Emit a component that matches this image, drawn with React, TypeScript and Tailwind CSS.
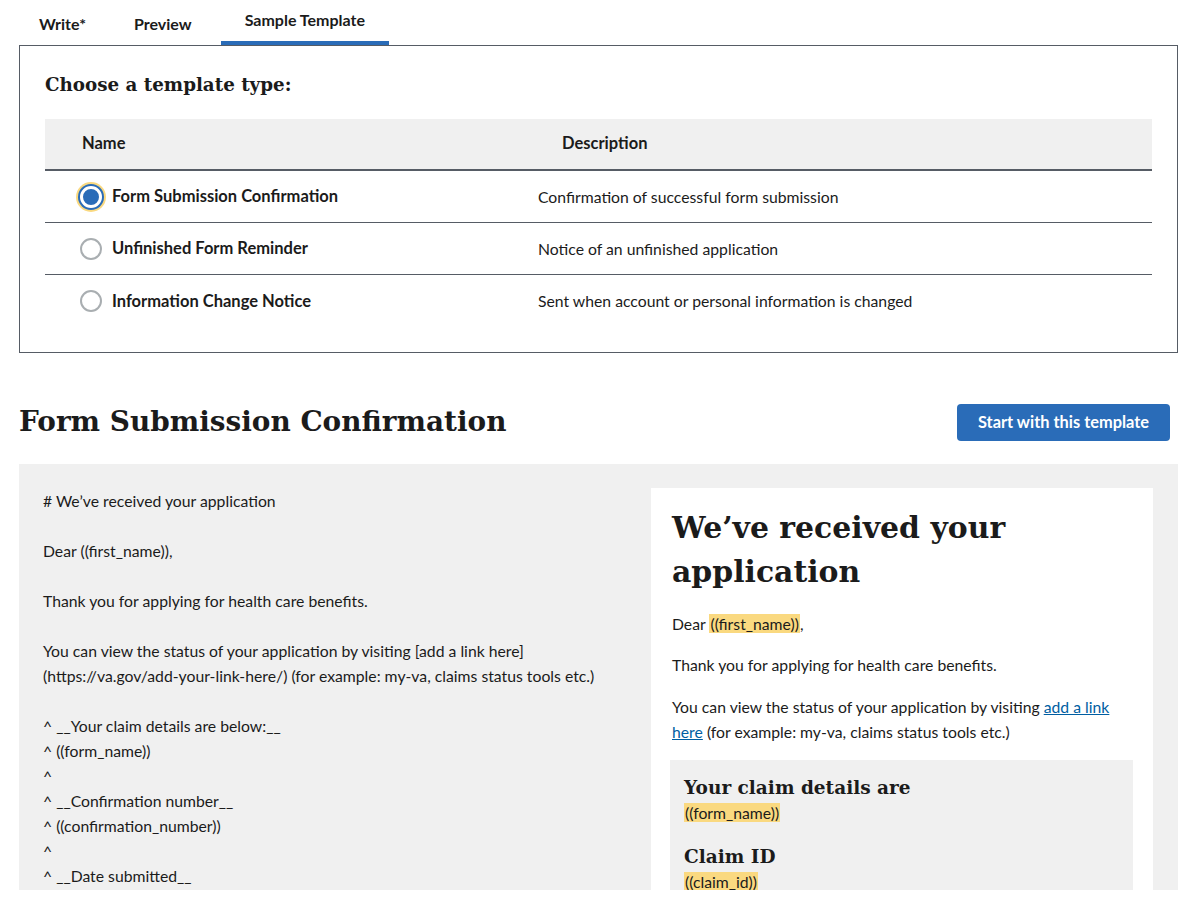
import React, { useState } from 'react';

const templates = [
    { id: 'confirm', name: 'Form Submission Confirmation', description: 'Confirmation of successful form submission' },
    { id: 'reminder', name: 'Unfinished Form Reminder', description: 'Notice of an unfinished application' },
    { id: 'change', name: 'Information Change Notice', description: 'Sent when account or personal information is changed' },
];

const markdownLines = [
    '# We\u2019ve received your application',
    '',
    'Dear ((first_name)),',
    '',
    'Thank you for applying for health care benefits.',
    '',
    'You can view the status of your application by visiting [add a link here]',
    '(https://va.gov/add-your-link-here/) (for example: my-va, claims status tools etc.)',
    '',
    '^ __Your claim details are below:__',
    '^ ((form_name))',
    '^',
    '^ __Confirmation number__',
    '^ ((confirmation_number))',
    '^',
    '^ __Date submitted__',
];

function Field({ children }: { children: React.ReactNode }) {
    return <span className="bg-[#fad980] px-px">{children}</span>;
}

export default function App() {
    const [selected, setSelected] = useState('confirm');
    const tabs = ['Write*', 'Preview', 'Sample Template'];

    return (
        <div className="min-h-screen bg-white font-['Lato',sans-serif] text-[15.75px] text-[#1b1b1b]">
            <div className="w-[1159px] ml-[19px]">
                {/* Tabs */}
                <div className="flex h-[45px] gap-[8px]">
                    {tabs.map((tab, i) => (
                        <div
                            key={tab}
                            className={
                                i === 2
                                    ? 'px-[24px] flex items-center font-bold text-[16px] border-b-4 border-[#2a6cb8] pb-[2px] ml-[1px]'
                                    : 'px-[20px] flex items-center font-bold text-[16px] pt-[3px]'
                            }
                        >
                            {tab}
                        </div>
                    ))}
                </div>

                {/* Template chooser */}
                <div className="border border-[#565c65] px-[25px] pt-[25px] pb-[25px]">
                    <h3 className="font-['DejaVu_Serif',serif] font-bold text-[18.3px] leading-[28px] mb-[20px] text-[#1b1b1b]">
                        Choose a template type:
                    </h3>
                    <div>
                        <div className="flex h-[52px] items-center bg-[#f0f0f0] border-b-2 border-[#565c65] font-bold text-[16.5px] pb-[2px]">
                            <div className="w-[480px] pl-[37px]">Name</div>
                            <div className="pl-[37px]">Description</div>
                        </div>
                        {templates.map((t, i) => (
                            <div
                                key={t.id}
                                onClick={() => setSelected(t.id)}
                                className={
                                    i < templates.length - 1
                                        ? 'flex h-[52px] items-center border-b border-[#565c65] cursor-pointer'
                                        : 'flex h-[52px] items-center cursor-pointer'
                                }
                            >
                                <div className="w-[493px] pl-[35px] flex items-center gap-[10px] font-bold text-[16.5px]">
                                    {selected === t.id ? (
                                        <span className="w-[22px] h-[22px] rounded-full bg-[#2a6cb8] border-[3px] border-white shadow-[0_0_0_2px_#2a6cb8,0_0_0_4px_#fad980] shrink-0" />
                                    ) : (
                                        <span className="w-[22px] h-[22px] rounded-full bg-white border-2 border-[#a9aeb1] shrink-0" />
                                    )}
                                    {t.name}
                                </div>
                                <div>{t.description}</div>
                            </div>
                        ))}
                    </div>
                </div>

                {/* Preview header */}
                <div className="flex items-center justify-between mt-[50px] mb-[23px] pr-[8px]">
                    <h2 className="font-['DejaVu_Serif',serif] font-bold text-[27.9px] leading-[38px] text-[#1b1b1b]">
                        Form Submission Confirmation
                    </h2>
                    <button className="bg-[#2a6cb8] text-white font-bold text-[16.4px] h-[37px] w-[213px] rounded-[4px]">
                        Start with this template
                    </button>
                </div>

                {/* Sample */}
                <div className="bg-[#f0f0f0] flex justify-between pt-[24px] pl-[24px] pr-[25px] h-[426px] overflow-hidden">
                    <div className="leading-[25px] whitespace-pre">
                        {markdownLines.map((line, i) => (
                            <div key={i} className="h-[25px]">{line}</div>
                        ))}
                    </div>
                    <div className="w-[502px] bg-white pl-[21px] pr-[20px] pt-[18px]">
                        <h1 className="font-['DejaVu_Serif',serif] font-bold text-[29.9px] leading-[44px] text-[#1b1b1b]">
                            We’ve received your application
                        </h1>
                        <p className="mt-[18px] leading-[24px]">
                            Dear <Field>((first_name))</Field>,
                        </p>
                        <p className="mt-[17px] leading-[24px]">Thank you for applying for health care benefits.</p>
                        <p className="mt-[17px] leading-[25px]">
                            You can view the status of your application by visiting{' '}
                            <a className="text-[#005ea2] underline">add a link here</a> (for example: my-va, claims status tools etc.)
                        </p>
                        <div className="mt-[16px] ml-[-2px] w-[463px] bg-[#f0f0f0] pl-[14px] pt-[16px] pb-[20px]">
                            <div className="font-['DejaVu_Serif',serif] font-bold text-[18.5px] leading-[24px]">
                                Your claim details are
                            </div>
                            <div className="leading-[26px]">
                                <Field>((form_name))</Field>
                            </div>
                            <div className="font-['DejaVu_Serif',serif] font-bold text-[18.5px] leading-[24px] mt-[19px]">
                                Claim ID
                            </div>
                            <div className="leading-[26px]">
                                <Field>((claim_id))</Field>
                            </div>
                        </div>
                    </div>
                </div>
            </div>
        </div>
    );
}
